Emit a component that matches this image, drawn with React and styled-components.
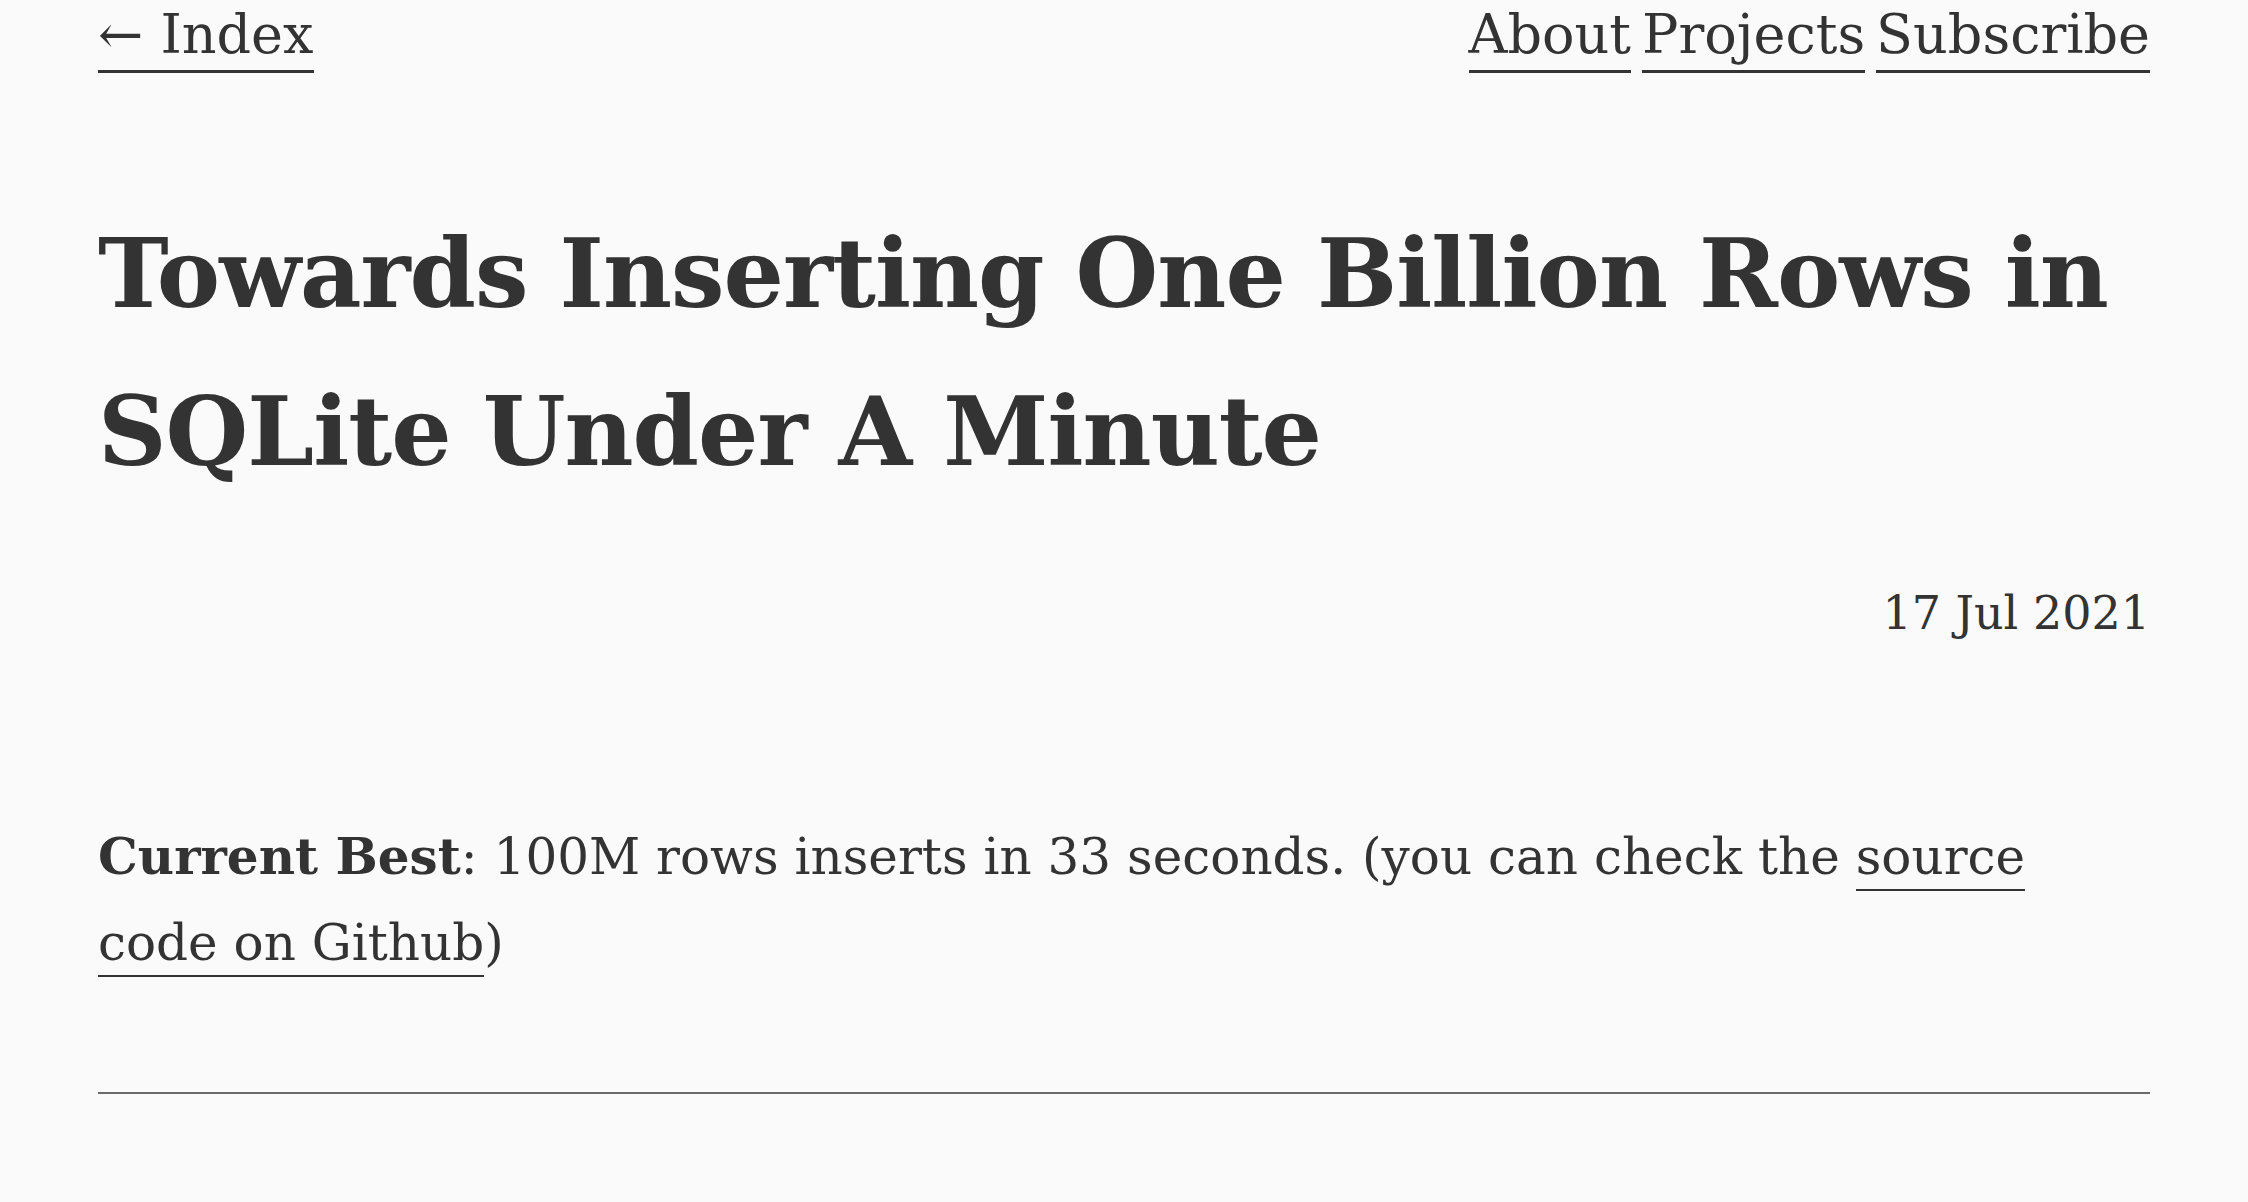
import React from 'react';
import styled, { createGlobalStyle } from 'styled-components';

const GlobalStyle = createGlobalStyle`
    html, body {
        margin: 0;
        padding: 0;
        background: #fafafa;
    }
    body {
        color: #333;
        font-family: "DejaVu Serif", "Liberation Serif", serif;
    }
`

const Page = styled.div`
    max-width: 2052px;
    margin: 0 auto;
    padding: 0 98px;
`

const Nav = styled.nav`
    display: flex;
    justify-content: space-between;
    align-items: flex-start;
    font-size: 54px;
    line-height: 1;
    padding-top: 8px;

    .links {
        display: flex;
        gap: 11px;
    }
`

const NavLink = styled.a`
    color: #333;
    text-decoration: none;
    border-bottom: 3px solid #333;
    padding-bottom: 8px;
    display: inline-block;
`

const Title = styled.h1`
    font-size: 95px;
    font-weight: bold;
    line-height: 158px;
    margin: 122px 0 0;
    letter-spacing: -1px;
`

const PostDate = styled.div`
    text-align: right;
    font-size: 46px;
    margin-top: 75px;
`

const Body = styled.p`
    font-size: 50px;
    line-height: 86px;
    margin: 174px 0 0;

    strong {
        font-weight: bold;
    }

    a {
        color: #333;
        text-decoration: none;
        border-bottom: 2px solid #333;
        padding-bottom: 3px;
    }
`

const Rule = styled.hr`
    border: none;
    border-top: 2px solid #6b6b6b;
    margin: 106px 0 0;
`

const App = () => (
    <>
        <GlobalStyle />
        <Page>
            <Nav>
                <NavLink href="#">← Index</NavLink>
                <div className="links">
                    <NavLink href="#">About</NavLink>
                    <NavLink href="#">Projects</NavLink>
                    <NavLink href="#">Subscribe</NavLink>
                </div>
            </Nav>
            <Title>Towards Inserting One Billion Rows in SQLite Under A Minute</Title>
            <PostDate>17 Jul 2021</PostDate>
            <Body>
                <strong>Current Best</strong>: 100M rows inserts in 33 seconds. (you can check the <a href="#">source code on Github</a>)
            </Body>
            <Rule />
        </Page>
    </>
);

export default App;
